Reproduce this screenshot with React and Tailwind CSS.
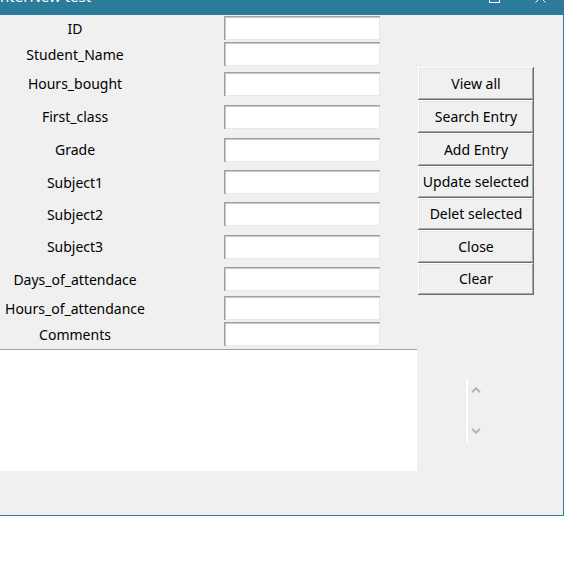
import React from 'react';

const fields = [
  'ID',
  'Student_Name',
  'Hours_bought',
  'First_class',
  'Grade',
  'Subject1',
  'Subject2',
  'Subject3',
  'Days_of_attendace',
  'Hours_of_attendance',
  'Comments',
];

const buttons = ['View all', 'Search Entry', 'Add Entry', 'Update selected', 'Delet selected', 'Close', 'Clear'];

// row heights follow tk grid: plain rows 26px, rows beside a button ~33px
const rowClasses = [
  'row-start-1',
  'row-start-2',
  'row-start-3',
  'row-start-4',
  'row-start-5',
  'row-start-6',
  'row-start-7',
  'row-start-8',
  'row-start-9',
  'row-start-10',
  'row-start-11',
];

const Entry = () => (
  <input
    type="text"
    className="w-[156px] h-[24px] bg-white border-0 outline-none px-1 text-[14px] shadow-[inset_1px_1px_0_#a0a0a0,inset_2px_2px_0_#c8c8c8,inset_-1px_-1px_0_#e9e9e9]"
  />
);

const TkButton = ({ label }) => (
  <button className="w-[116px] h-full bg-[#f0f0f0] text-black text-[14px] leading-none shadow-[inset_-1px_-1px_0_#6d6d6d,inset_1px_1px_0_#ffffff,inset_-2px_-2px_0_#a8a8a8,inset_2px_2px_0_#e6e6e6]">
    {label}
  </button>
);

const App = () => {
  return (
    <div className="w-[569px] h-[570px] bg-white overflow-hidden font-['Noto_Sans',sans-serif] text-black">
      <div className="w-[564px] bg-[#f0f0f0] border-r border-b border-[#2d7b9b] overflow-hidden">
        {/* title bar, mostly cut off at the top */}
        <div className="h-[32px] -mt-[17px] bg-[#2d7b9b] flex items-center text-white">
          <span className="-ml-[5px] text-[15px] leading-none -translate-y-[3px]">InterNew test</span>
          <div className="ml-auto flex items-center -translate-y-[2px]">
            <div className="w-[45px] flex justify-center">
              <div className="w-[10px] h-px bg-white" />
            </div>
            <div className="w-[45px] flex justify-center">
              <div className="w-[11px] h-[11px] border border-white" />
            </div>
            <div className="w-[46px] flex justify-center">
              <svg width="11" height="11" viewBox="0 0 11 11">
                <path d="M0.5 0.5 L10.5 10.5 M10.5 0.5 L0.5 10.5" stroke="#fff" strokeWidth="1" />
              </svg>
            </div>
          </div>
        </div>

        {/* form */}
        <div className="grid grid-cols-[224px_194px_116px] grid-rows-[26px_26px_33px_33px_33px_32px_32px_33px_32px_26px_26px]">
          {fields.map((name, i) => (
            <React.Fragment key={name}>
              <div className={`col-start-1 ${rowClasses[i]} w-[150px] flex items-center justify-center text-[14px]`}>
                {name}
              </div>
              <div className={`col-start-2 ${rowClasses[i]} flex items-center`}>
                <Entry />
              </div>
            </React.Fragment>
          ))}
          {buttons.map((label, i) => (
            <div key={label} className={`col-start-3 ${rowClasses[i + 2]}`}>
              <TkButton label={label} />
            </div>
          ))}
        </div>

        {/* listbox + scrollbar */}
        <div className="mt-[2px] flex items-center">
          <div className="w-[417px] h-[122px] bg-white border-t border-[#a0a0a0]" />
          <div className="ml-[49px] w-[17px] h-[64px] border-l-2 border-white flex flex-col items-center justify-between pt-[9px] pb-[8px] pl-[1px]">
            <svg width="10" height="6" viewBox="0 0 10 6">
              <polyline points="1,5.2 5,1.2 9,5.2" fill="none" stroke="#b4b4b4" strokeWidth="2" />
            </svg>
            <svg width="10" height="6" viewBox="0 0 10 6">
              <polyline points="1,0.8 5,4.8 9,0.8" fill="none" stroke="#b4b4b4" strokeWidth="2" />
            </svg>
          </div>
        </div>
        <div className="h-[44px]" />
      </div>
    </div>
  );
};

export default App;
